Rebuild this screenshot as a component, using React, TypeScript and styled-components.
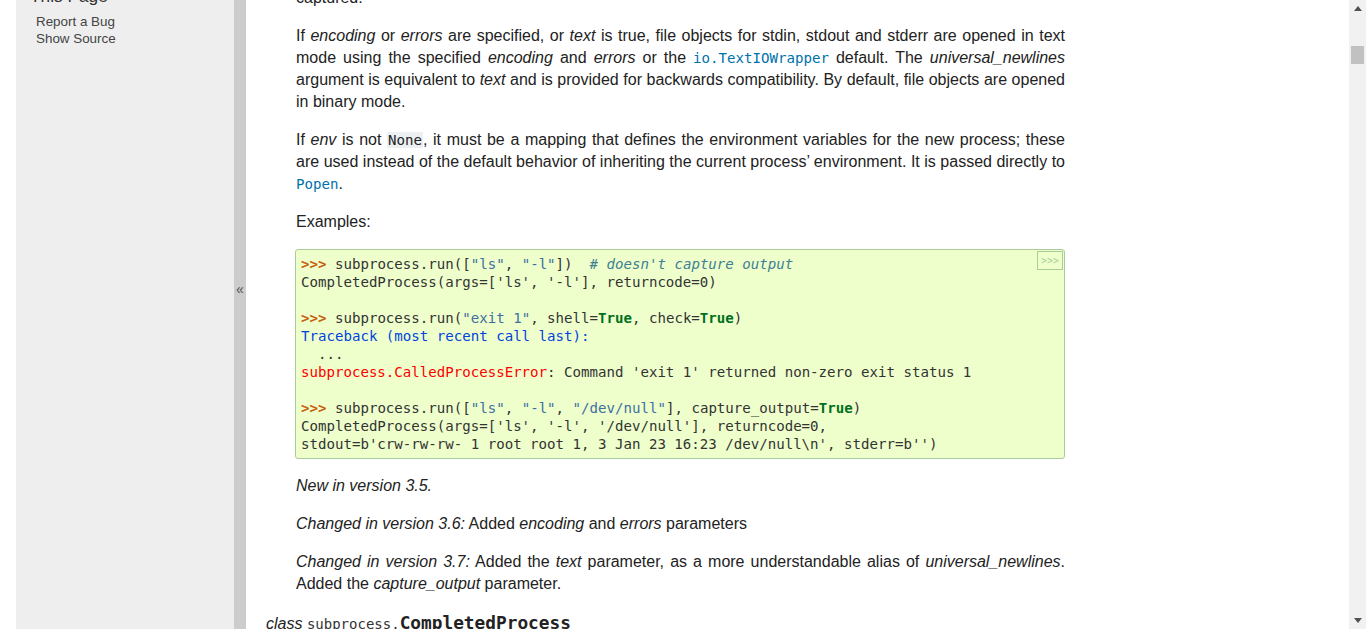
import React from "react";
import styled, { createGlobalStyle } from "styled-components";

const GlobalStyle = createGlobalStyle`
  html, body { margin: 0; padding: 0; background: #fff; overflow: hidden; }
  body { font-family: "Liberation Sans", Arial, sans-serif; color: #222; }
`;

const MONO = `"DejaVu Sans Mono", "Liberation Mono", monospace`;

const Page = styled.div`
  display: flex;
  height: 629px;
  overflow: hidden;
  padding-left: 16px;
  background: #fff;
`;

const Sidebar = styled.aside`
  width: 218px;
  flex: none;
  background: #eeeeee;
  overflow: hidden;
`;

const SidebarInner = styled.div`
  margin-top: -14px;
  padding-left: 14px;
`;

const SidebarHeading = styled.h3`
  margin: 0;
  font-size: 17.3px;
  line-height: 20px;
  font-weight: normal;
  color: #333;
`;

const LinkList = styled.ul`
  list-style: none;
  margin: 7px 0 0 6px;
  padding: 0;
`;

const LinkItem = styled.li`
  font-size: 13.4px;
  line-height: 17px;
  color: #444;
`;

const CollapseBar = styled.div`
  width: 12px;
  flex: none;
  background: #cccccc;
  color: #555;
  display: flex;
  justify-content: center;
  padding-top: 280px;
  font-size: 14px;
  line-height: 18px;
`;

const Main = styled.main`
  flex: 1;
  min-width: 0;
  padding-left: 20px;
  overflow: hidden;
`;

const DocBody = styled.div`
  width: 799px;
  margin-top: -13px;
`;

const FunctionBody = styled.div`
  margin-left: 30px;
`;

const Para = styled.p`
  margin: 16px 0;
  font-size: 16px;
  line-height: 22px;
  text-align: justify;
  &:first-child { margin-top: 0; }
`;

const Literal = styled.code`
  font-family: ${MONO};
  font-size: 14.1px;
  background: #ecf0f3;
  padding: 0 1px;
  color: #222;
`;

const XRef = styled.a`
  font-family: ${MONO};
  font-size: 14.1px;
  color: #0072aa;
  text-decoration: none;
`;

const CodeBlock = styled.pre`
  position: relative;
  margin: 16px 0 15px -1px;
  width: 770px;
  box-sizing: border-box;
  padding: 5px;
  background: #eeffcc;
  border: 1px solid #aacc99;
  border-radius: 3px;
  font-family: ${MONO};
  font-size: 14.1px;
  line-height: 18px;
  color: #333;
  white-space: pre;
  overflow: hidden;
`;

const CopyButton = styled.span`
  position: absolute;
  top: 1px;
  right: 1px;
  width: 24px;
  height: 17px;
  border: 1px solid #aacc99;
  color: #aacc99;
  font-size: 10px;
  line-height: 17px;
  text-align: center;
`;

const Tok = styled.span<{ $kind: "prompt" | "str" | "comment" | "kw" | "tb" | "err" }>`
  ${({ $kind }) =>
    $kind === "prompt"
      ? "color: #c65d09; font-weight: bold;"
      : $kind === "str"
      ? "color: #4070a0;"
      : $kind === "comment"
      ? "color: #408090; font-style: italic;"
      : $kind === "kw"
      ? "color: #007020; font-weight: bold;"
      : $kind === "tb"
      ? "color: #0044dd;"
      : "color: #ff0000;"}
`;

const ClassSig = styled.div`
  margin-top: 17px;
  font-size: 16px;
  line-height: 22px;
  white-space: nowrap;
`;

const SigPrefix = styled.span`
  font-family: ${MONO};
  font-size: 14px;
  color: #333;
`;

const SigName = styled.span`
  font-family: ${MONO};
  font-size: 17.8px;
  font-weight: bold;
  color: #222;
`;

const Scrollbar = styled.div`
  width: 17px;
  flex: none;
  background: #f1f1f1;
  display: flex;
  flex-direction: column;
`;

const ScrollArrow = styled.div`
  height: 17px;
  display: flex;
  align-items: center;
  justify-content: center;
  flex: none;
`;

const ScrollTrack = styled.div`
  flex: 1;
  display: flex;
  justify-content: center;
`;

const Thumb = styled.div`
  width: 13px;
  height: 18px;
  margin-top: 29px;
  background: #c1c1c1;
`;

const P = (k: string) => <Tok $kind="prompt">{k}</Tok>;

export default function App() {
  return (
    <>
      <GlobalStyle />
      <Page>
        <Sidebar>
          <SidebarInner>
            <SidebarHeading>This Page</SidebarHeading>
            <LinkList>
              <LinkItem>Report a Bug</LinkItem>
              <LinkItem>Show Source</LinkItem>
            </LinkList>
          </SidebarInner>
        </Sidebar>
        <CollapseBar>«</CollapseBar>
        <Main>
          <DocBody>
            <FunctionBody>
              <Para>captured.</Para>
              <Para>
                If <em>encoding</em> or <em>errors</em> are specified, or <em>text</em> is true, file objects for
                stdin, stdout and stderr are opened in text mode using the specified <em>encoding</em> and{" "}
                <em>errors</em> or the <XRef>io.TextIOWrapper</XRef> default. The <em>universal_newlines</em>{" "}
                argument is equivalent to <em>text</em> and is provided for backwards compatibility. By default, file
                objects are opened in binary mode.
              </Para>
              <Para>
                If <em>env</em> is not <Literal>None</Literal>, it must be a mapping that defines the environment
                variables for the new process; these are used instead of the default behavior of inheriting the
                current process’ environment. It is passed directly to <XRef>Popen</XRef>.
              </Para>
              <Para>Examples:</Para>
              <CodeBlock>
                <CopyButton>&gt;&gt;&gt;</CopyButton>
                {P(">>> ")}subprocess.run([<Tok $kind="str">"ls"</Tok>, <Tok $kind="str">"-l"</Tok>]){"  "}
                <Tok $kind="comment"># doesn't capture output</Tok>
                {"\n"}CompletedProcess(args=['ls', '-l'], returncode=0){"\n"}
                {"\n"}
                {P(">>> ")}subprocess.run(<Tok $kind="str">"exit 1"</Tok>, shell=<Tok $kind="kw">True</Tok>, check=
                <Tok $kind="kw">True</Tok>){"\n"}
                <Tok $kind="tb">Traceback (most recent call last):</Tok>
                {"\n"}
                {"  ...\n"}
                <Tok $kind="err">subprocess.CalledProcessError</Tok>: Command 'exit 1' returned non-zero exit status 1
                {"\n"}
                {"\n"}
                {P(">>> ")}subprocess.run([<Tok $kind="str">"ls"</Tok>, <Tok $kind="str">"-l"</Tok>,{" "}
                <Tok $kind="str">"/dev/null"</Tok>], capture_output=<Tok $kind="kw">True</Tok>){"\n"}
                {"CompletedProcess(args=['ls', '-l', '/dev/null'], returncode=0,\n"}
                {"stdout=b'crw-rw-rw- 1 root root 1, 3 Jan 23 16:23 /dev/null\\n', stderr=b'')"}
              </CodeBlock>
              <Para>
                <em>New in version 3.5.</em>
              </Para>
              <Para>
                <em>Changed in version 3.6:</em> Added <em>encoding</em> and <em>errors</em> parameters
              </Para>
              <Para>
                <em>Changed in version 3.7:</em> Added the <em>text</em> parameter, as a more understandable alias of{" "}
                <em>universal_newlines</em>. Added the <em>capture_output</em> parameter.
              </Para>
            </FunctionBody>
            <ClassSig>
              <em>class </em>
              <SigPrefix>subprocess.</SigPrefix>
              <SigName>CompletedProcess</SigName>
            </ClassSig>
          </DocBody>
        </Main>
        <Scrollbar>
          <ScrollArrow>
            <svg width="8" height="5" viewBox="0 0 8 5">
              <path d="M0 5 L4 0 L8 5 Z" fill="#505050" />
            </svg>
          </ScrollArrow>
          <ScrollTrack>
            <Thumb />
          </ScrollTrack>
          <ScrollArrow>
            <svg width="8" height="5" viewBox="0 0 8 5">
              <path d="M0 0 L4 5 L8 0 Z" fill="#505050" />
            </svg>
          </ScrollArrow>
        </Scrollbar>
      </Page>
    </>
  );
}
